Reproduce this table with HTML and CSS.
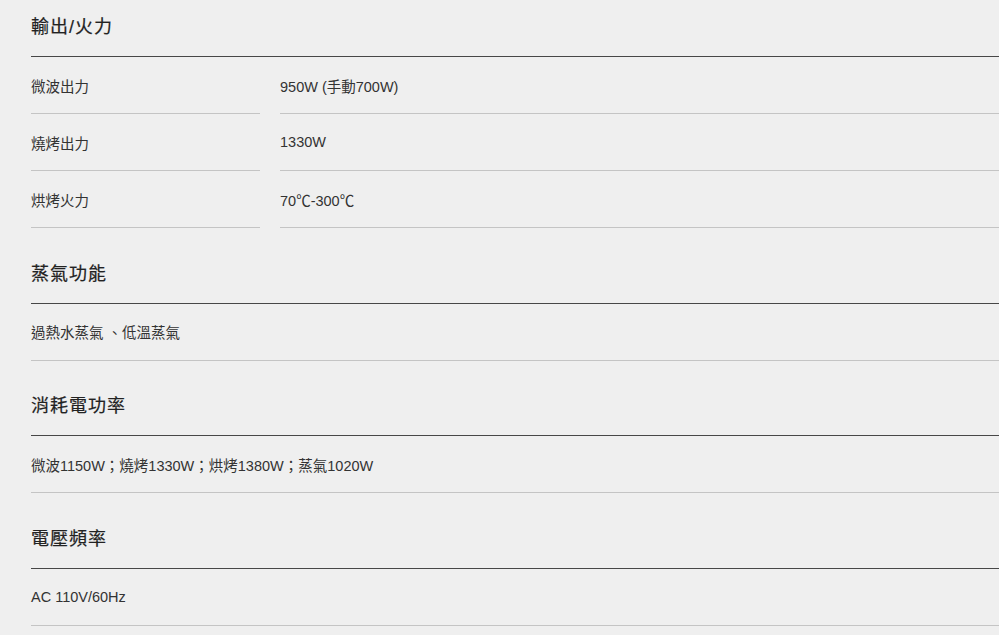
FILE: index.html
```html
<!DOCTYPE html>
<html lang="zh-Hant">
<head>
<meta charset="utf-8">
<title>規格</title>
<link rel="stylesheet" href="styles.css">
</head>
<body>
<div class="specs">
  <section class="spec-section">
    <h3 class="spec-title">輸出/火力</h3>
    <div class="spec-grid">
      <div class="spec-label">微波出力</div>
      <div class="spec-value">950W (手動700W)</div>
      <div class="spec-label">燒烤出力</div>
      <div class="spec-value">1330W</div>
      <div class="spec-label">烘烤火力</div>
      <div class="spec-value">70℃-300℃</div>
    </div>
  </section>
  <section class="spec-section">
    <h3 class="spec-title">蒸氣功能</h3>
    <div class="spec-full">過熱水蒸氣 、低溫蒸氣</div>
  </section>
  <section class="spec-section">
    <h3 class="spec-title">消耗電功率</h3>
    <div class="spec-full">微波1150W；燒烤1330W；烘烤1380W；蒸氣1020W</div>
  </section>
  <section class="spec-section">
    <h3 class="spec-title">電壓頻率</h3>
    <div class="spec-full">AC 110V/60Hz</div>
  </section>
</div>
</body>
</html>
```
FILE: styles.css
```css
html, body {
  margin: 0;
  padding: 0;
  background: #efefef;
}
body {
  font-family: "Liberation Sans", Arial, "Noto Sans CJK TC", sans-serif;
  color: #333;
  overflow: hidden;
}
.specs {
  padding-left: 31px;
}
.spec-section + .spec-section {
  margin-top: 18.7px;
}
.spec-title {
  margin: 0;
  padding: 15px 0 16px;
  height: 25px;
  font-size: 18px;
  line-height: 25px;
  font-weight: 400;
  letter-spacing: 1px;
  color: #222;
  border-bottom: 1px solid #474747;
  -webkit-text-stroke: 0.2px #222;
}
.spec-grid {
  display: grid;
  grid-template-columns: 229px 1fr;
  column-gap: 20px;
}
.spec-label,
.spec-value,
.spec-full {
  height: 56px;
  display: flex;
  align-items: center;
  font-size: 14.5px;
  border-bottom: 1px solid #c4c4c4;
}
```
